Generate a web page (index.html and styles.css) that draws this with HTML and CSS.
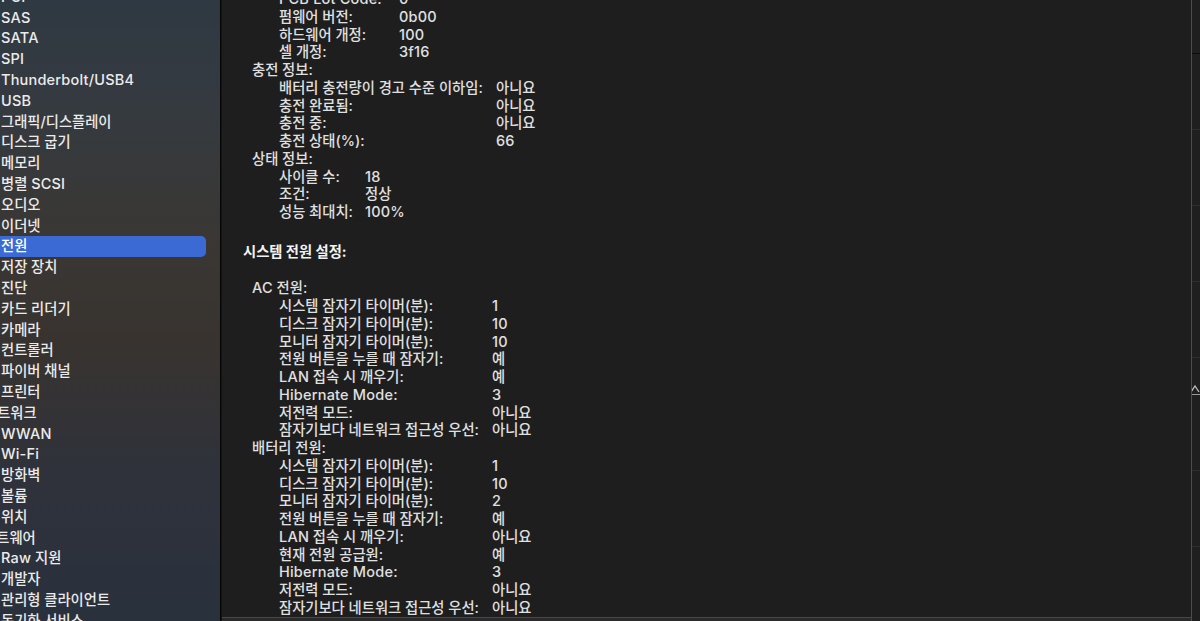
FILE: index.html
```html
<!DOCTYPE html>
<html lang="ko">
<head>
    <meta charset="UTF-8">
    <title>시스템 정보 - 전원</title>
    <link rel="stylesheet" href="styles.css">
</head>
<body>
<div class="app">
    <nav class="sidebar">
        <ul class="tree">
            <li><span class="en">PCI</span></li>
            <li><span class="en">SAS</span></li>
            <li><span class="en">SATA</span></li>
            <li><span class="en">SPI</span></li>
            <li><span class="en">Thunderbolt/USB4</span></li>
            <li><span class="en">USB</span></li>
            <li>그래픽/디스플레이</li>
            <li>디스크 굽기</li>
            <li>메모리</li>
            <li>병렬 <span class="en">SCSI</span></li>
            <li>오디오</li>
            <li>이더넷</li>
            <li class="sel">전원</li>
            <li>저장 장치</li>
            <li>진단</li>
            <li>카드 리더기</li>
            <li>카메라</li>
            <li>컨트롤러</li>
            <li>파이버 채널</li>
            <li>프린터</li>
            <li class="top net">네트워크</li>
            <li><span class="en">WWAN</span></li>
            <li><span class="en">Wi-Fi</span></li>
            <li>방화벽</li>
            <li>볼륨</li>
            <li>위치</li>
            <li class="top soft">소프트웨어</li>
            <li><span class="en">Raw</span> 지원</li>
            <li>개발자</li>
            <li>관리형 클라이언트</li>
            <li>동기화 서비스</li>
        </ul>
    </nav>

    <main class="main">
        <div class="scroll">
            <dl class="kv kv-cell">
                <dt><span class="en">PCB Lot Code:</span></dt><dd><span class="en">0</span></dd>
                <dt>펌웨어 버전:</dt><dd><span class="en">0b00</span></dd>
                <dt>하드웨어 개정:</dt><dd><span class="en">100</span></dd>
                <dt>셀 개정:</dt><dd><span class="en">3f16</span></dd>
            </dl>
            <div class="title">충전 정보:</div>
            <dl class="kv kv-charge">
                <dt>배터리 충전량이 경고 수준 이하임:</dt><dd>아니요</dd>
                <dt>충전 완료됨:</dt><dd>아니요</dd>
                <dt>충전 중:</dt><dd>아니요</dd>
                <dt>충전 상태(%):</dt><dd><span class="en">66</span></dd>
            </dl>
            <div class="title">상태 정보:</div>
            <dl class="kv kv-health">
                <dt>사이클 수:</dt><dd><span class="en">18</span></dd>
                <dt>조건:</dt><dd>정상</dd>
                <dt>성능 최대치:</dt><dd><span class="en">100%</span></dd>
            </dl>

            <h2 class="heading">시스템 전원 설정:</h2>

            <div class="title first"><span class="en">AC</span> 전원:</div>
            <dl class="kv kv-power">
                <dt>시스템 잠자기 타이머(분):</dt><dd><span class="en">1</span></dd>
                <dt>디스크 잠자기 타이머(분):</dt><dd><span class="en">10</span></dd>
                <dt>모니터 잠자기 타이머(분):</dt><dd><span class="en">10</span></dd>
                <dt>전원 버튼을 누를 때 잠자기:</dt><dd>예</dd>
                <dt><span class="en">LAN</span> 접속 시 깨우기:</dt><dd>예</dd>
                <dt><span class="en">Hibernate Mode:</span></dt><dd><span class="en">3</span></dd>
                <dt>저전력 모드:</dt><dd>아니요</dd>
                <dt>잠자기보다 네트워크 접근성 우선:</dt><dd>아니요</dd>
            </dl>
            <div class="title">배터리 전원:</div>
            <dl class="kv kv-power">
                <dt>시스템 잠자기 타이머(분):</dt><dd><span class="en">1</span></dd>
                <dt>디스크 잠자기 타이머(분):</dt><dd><span class="en">10</span></dd>
                <dt>모니터 잠자기 타이머(분):</dt><dd><span class="en">2</span></dd>
                <dt>전원 버튼을 누를 때 잠자기:</dt><dd>예</dd>
                <dt><span class="en">LAN</span> 접속 시 깨우기:</dt><dd>아니요</dd>
                <dt>현재 전원 공급원:</dt><dd>예</dd>
                <dt><span class="en">Hibernate Mode:</span></dt><dd><span class="en">3</span></dd>
                <dt>저전력 모드:</dt><dd>아니요</dd>
                <dt>잠자기보다 네트워크 접근성 우선:</dt><dd>아니요</dd>
            </dl>
        </div>
        <div class="hbar"></div>
    </main>

    <aside class="edge">
        <div class="edge-head"></div>
        <div class="edge-row"></div>
        <div class="edge-row"></div>
        <div class="edge-row"></div>
        <div class="edge-row"></div>
        <div class="edge-sort">
            <svg width="9" height="8" viewBox="0 0 9 8"><polyline points="0,7 4,1 8,7" fill="none" stroke="#bdbdbd" stroke-width="1.3"/></svg>
        </div>
        <div class="edge-row"></div>
        <div class="edge-row"></div>
        <div class="edge-row"></div>
    </aside>
</div>
</body>
</html>
```

FILE: styles.css
```css
html, body {
    margin: 0;
    height: 100%;
    overflow: hidden;
}

body {
    background: #1e1e1e;
    color: #e0e0e0;
    font-family: Inter, "Noto Sans CJK KR", sans-serif;
    font-size: 14.3px;
    font-weight: 500;
}

.en {
    font-size: 14.5px;
    letter-spacing: 0.2px;
}

.app {
    display: flex;
    height: 621px;
}

/* sidebar */

.sidebar {
    width: 220px;
    flex: none;
    overflow: hidden;
    border-right: 1px solid #050505;
    background: linear-gradient(180deg, #2f3943 0%, #353a3f 18%, #3a3734 38%, #38332f 55%, #30323a 74%, #29313d 100%);
    color: #ebebeb;
}

.tree {
    list-style: none;
    margin: -13.2px 0 0;
    padding: 0;
}

.tree li {
    height: 20.8px;
    line-height: 20.8px;
    padding-left: 1px;
    white-space: nowrap;
}

.tree .sel {
    margin-left: -12px;
    padding-left: 13px;
    width: 205px;
    background: #3b6ad4;
    border-radius: 5px;
    color: #fff;
}

.tree .net {
    margin-left: -17px;
}

.tree .soft {
    margin-left: -31px;
}

/* content */

.main {
    flex: 1;
    display: flex;
    flex-direction: column;
    border-left: 1px solid #141414;
    min-width: 0;
}

.scroll {
    flex: 1;
    overflow: hidden;
}

.scroll > :first-child {
    margin-top: -9.9px;
}

.kv {
    display: grid;
    grid-auto-rows: 17.75px;
    margin: 0;
    padding-left: 57px;
    line-height: 17.75px;
    white-space: nowrap;
}

.kv dt, .kv dd {
    margin: 0;
}

.kv-cell { grid-template-columns: 120px auto; }
.kv-charge { grid-template-columns: 217px auto; }
.kv-health { grid-template-columns: 86px auto; }
.kv-power { grid-template-columns: 213px auto; }

.title {
    height: 17.75px;
    line-height: 17.75px;
    padding-left: 30px;
}

.title.first {
    margin-top: 18.7px;
}

.heading {
    margin: 22px 0 0;
    padding-left: 21px;
    height: 17.75px;
    line-height: 17.75px;
    font-size: 14.3px;
    font-weight: 700;
    color: #f2f2f2;
}

.hbar {
    height: 3px;
    flex: none;
    border-top: 1px solid #484848;
    background: #2a2a2a;
}

/* clipped column on the right edge */

.edge {
    width: 8px;
    flex: none;
    border-left: 1px solid #4c4c4c;
    background: #1f1f1f;
    overflow: hidden;
}

.edge-head {
    height: 53px;
    border-bottom: 1px solid #0c0c0c;
}

.edge-row {
    height: 75px;
    border-bottom: 1px solid #2e2e2e;
}

.edge-sort {
    height: 36px;
    display: flex;
    align-items: flex-end;
    border-bottom: 1px solid #9a9a9a;
}

.edge-sort svg {
    display: block;
    margin-left: -1px;
    margin-bottom: 1px;
}
```
